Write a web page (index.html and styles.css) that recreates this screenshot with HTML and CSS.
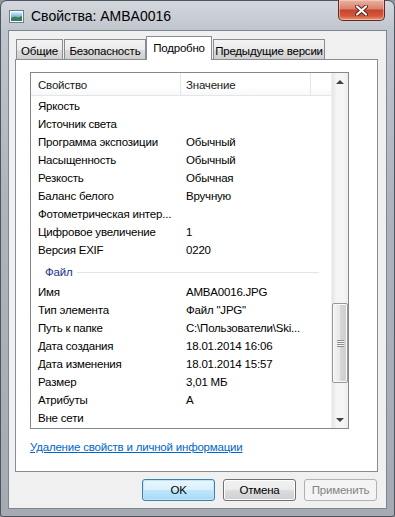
FILE: index.html
```html
<!DOCTYPE html>
<html lang="ru">
<head>
    <meta charset="UTF-8">
    <meta name="viewport" content="width=device-width, initial-scale=1.0">
    <title>Свойства: AMBA0016</title>
    <link rel="stylesheet" href="styles.css">
</head>
<body>
    <div class="window">
        <div class="titlebar">
            <svg class="app-icon" width="15" height="13" viewBox="0 0 15 13">
                <defs>
                    <linearGradient id="sky" x1="0" y1="0" x2="0" y2="1">
                        <stop offset="0" stop-color="#d6eefb"/>
                        <stop offset="0.55" stop-color="#6fb3de"/>
                        <stop offset="1" stop-color="#1d5f92"/>
                    </linearGradient>
                </defs>
                <rect x="0.5" y="0.5" width="14" height="12" fill="#fff" stroke="#6b7c8c"/>
                <rect x="2" y="2" width="11" height="9" fill="url(#sky)"/>
                <path d="M2 8 L6 6.5 L9 7.5 L13 6 L13 11 L2 11 Z" fill="#3d7d55"/>
            </svg>
            <span class="title">Свойства: AMBA0016</span>
            <div class="close-btn">
                <svg width="13" height="11" viewBox="0 0 13 11">
                    <path d="M2 1.5 L11 9.5 M11 1.5 L2 9.5" stroke="#5a2018" stroke-width="4" stroke-linecap="round"/>
                    <path d="M2 1.5 L11 9.5 M11 1.5 L2 9.5" stroke="#fff" stroke-width="2.2" stroke-linecap="round"/>
                </svg>
            </div>
        </div>

        <div class="client">
            <div class="tabs">
                <div class="tab tab-general">Общие</div>
                <div class="tab tab-security">Безопасность</div>
                <div class="tab tab-details active">Подробно</div>
                <div class="tab tab-versions">Предыдущие версии</div>
            </div>

            <div class="panel">
                <div class="listview">
                    <div class="list-main">
                        <div class="list-header">
                            <div class="hcol hcol-name">Свойство</div>
                            <div class="hcol hcol-value">Значение</div>
                            <div class="hcol hcol-rest"></div>
                        </div>
                        <div class="rows">
                            <div class="row"><span class="cell-name">Яркость</span><span class="cell-value"></span></div>
                            <div class="row"><span class="cell-name">Источник света</span><span class="cell-value"></span></div>
                            <div class="row"><span class="cell-name">Программа экспозиции</span><span class="cell-value">Обычный</span></div>
                            <div class="row"><span class="cell-name">Насыщенность</span><span class="cell-value">Обычный</span></div>
                            <div class="row"><span class="cell-name">Резкость</span><span class="cell-value">Обычная</span></div>
                            <div class="row"><span class="cell-name">Баланс белого</span><span class="cell-value">Вручную</span></div>
                            <div class="row"><span class="cell-name">Фотометрическая интер...</span><span class="cell-value"></span></div>
                            <div class="row"><span class="cell-name">Цифровое увеличение</span><span class="cell-value">1</span></div>
                            <div class="row"><span class="cell-name">Версия EXIF</span><span class="cell-value">0220</span></div>
                            <div class="group-header"><span class="group-title">Файл</span><span class="group-line"></span></div>
                            <div class="row"><span class="cell-name">Имя</span><span class="cell-value">AMBA0016.JPG</span></div>
                            <div class="row"><span class="cell-name">Тип элемента</span><span class="cell-value">Файл "JPG"</span></div>
                            <div class="row"><span class="cell-name">Путь к папке</span><span class="cell-value">C:\Пользователи\Ski...</span></div>
                            <div class="row"><span class="cell-name">Дата создания</span><span class="cell-value">18.01.2014 16:06</span></div>
                            <div class="row"><span class="cell-name">Дата изменения</span><span class="cell-value">18.01.2014 15:57</span></div>
                            <div class="row"><span class="cell-name">Размер</span><span class="cell-value">3,01 МБ</span></div>
                            <div class="row"><span class="cell-name">Атрибуты</span><span class="cell-value">A</span></div>
                            <div class="row"><span class="cell-name">Вне сети</span><span class="cell-value"></span></div>
                        </div>
                    </div>
                    <div class="scrollbar">
                        <div class="scroll-arrow"><span class="arrow-up"></span></div>
                        <div class="scroll-track">
                            <div class="scroll-thumb">
                                <span class="grip"></span>
                            </div>
                        </div>
                        <div class="scroll-arrow"><span class="arrow-down"></span></div>
                    </div>
                </div>
                <a href="#" class="remove-link">Удаление свойств и личной информации</a>
            </div>

            <div class="buttons">
                <button class="btn btn-default">OK</button>
                <button class="btn">Отмена</button>
                <button class="btn btn-disabled" disabled>Применить</button>
            </div>
        </div>
    </div>
</body>
</html>
```

FILE: styles.css
```css
* { box-sizing: border-box; }

body {
    margin: 0;
    padding: 0;
    width: 395px;
    height: 517px;
    overflow: hidden;
    font-family: "Liberation Sans", Arial, sans-serif;
    font-size: 11.5px;
    letter-spacing: -0.2px;
    color: #000;
    background-color: #8f959c;
}

.window {
    width: 395px;
    height: 517px;
    display: flex;
    flex-direction: column;
    border: 1px solid #50555b;
    border-radius: 7px 7px 3px 3px;
    background: linear-gradient(to bottom, #d3d8de 0, #bfc5cc 30px, #aeb4bb 200px, #a5abb2 100%);
}

/* title bar */
.titlebar {
    height: 29px;
    display: flex;
    align-items: center;
    padding-left: 8px;
    flex-shrink: 0;
}
.app-icon { margin-right: 7px; margin-top: 1px; }
.title {
    font-size: 14px;
    letter-spacing: 0;
    color: #000;
}
.close-btn {
    margin-left: auto;
    margin-right: 9px;
    align-self: flex-start;
    margin-top: -1px;
    width: 47px;
    height: 21px;
    border: 1px solid #5e2b24;
    border-top: none;
    border-radius: 0 0 5px 5px;
    background: linear-gradient(to bottom, #eab3a3 0, #d9806a 45%, #c7432a 50%, #d3593c 80%, #e89a72 100%);
    box-shadow: inset 0 0 0 1px rgba(255, 220, 210, 0.5);
    display: flex;
    align-items: center;
    justify-content: center;
}

/* client area */
.client {
    margin: 0 7px 7px 7px;
    height: 479px;
    border: 1px solid #80868d;
    background-color: #f0f0f0;
    padding: 5px 8px 0 6px;
    display: flex;
    flex-direction: column;
}

/* tabs */
.tabs {
    display: flex;
    align-items: flex-end;
    height: 23px;
    padding-left: 1px;
    position: relative;
    z-index: 1;
}
.tab {
    height: 20px;
    border: 1px solid #898c95;
    border-bottom: none;
    background: linear-gradient(to bottom, #f3f3f3 0, #ebebeb 50%, #dddddd 51%, #cfcfcf 100%);
    display: flex;
    align-items: center;
    justify-content: center;
    padding-top: 2px;
    white-space: nowrap;
}
.tab-general { width: 47px; }
.tab-security { width: 82px; margin-left: 1px; }
.tab-details { width: 66px; }
.tab-versions { width: 112px; margin-left: 1px; }
.tab.active {
    height: 24px;
    margin-bottom: -1px;
    background: #fff;
    padding-top: 0;
    padding-bottom: 1px;
}

.panel {
    height: 413px;
    border: 1px solid #898c95;
    background-color: #fff;
    padding: 12px 0 0 14px;
    display: flex;
    flex-direction: column;
    align-items: flex-start;
}

/* list view */
.listview {
    width: 319px;
    height: 357px;
    border: 1px solid #828790;
    display: flex;
    overflow: hidden;
}
.list-main {
    flex: 1;
    overflow: hidden;
}
.list-header {
    display: flex;
    height: 23px;
    border-bottom: 1px solid #e5e5e5;
    background: linear-gradient(to bottom, #fff 0, #fff 60%, #f7f8fa 100%);
}
.hcol {
    display: flex;
    align-items: center;
    padding-top: 2px;
    color: #1a1a1a;
    border-right: 1px solid #e3e5e8;
}
.hcol-name { width: 150px; padding-left: 7px; }
.hcol-value { width: 130px; padding-left: 5px; }
.hcol-rest { flex: 1; border-right: none; }

.row {
    display: flex;
    height: 18px;
    align-items: center;
    padding-top: 1px;
}
.cell-name {
    width: 149px;
    padding-left: 7px;
    white-space: nowrap;
}
.cell-value {
    padding-left: 6px;
    white-space: nowrap;
}

.group-header {
    height: 24px;
    display: flex;
    align-items: center;
    padding: 3px 12px 0 14px;
}
.group-title {
    color: #1e3287;
    margin-right: 5px;
}
.group-line {
    flex: 1;
    height: 1px;
    background-color: #e2e4e8;
    margin-top: 1px;
}

/* scrollbar */
.scrollbar {
    width: 17px;
    display: flex;
    flex-direction: column;
    background: linear-gradient(to right, #e6e6e6 0, #f5f5f5 30%, #f5f5f5 70%, #ececec 100%);
    border-left: 1px solid #f0f0f0;
}
.scroll-arrow {
    height: 17px;
    display: flex;
    align-items: center;
    justify-content: center;
}
.arrow-up, .arrow-down {
    width: 0;
    height: 0;
    border-left: 4px solid transparent;
    border-right: 4px solid transparent;
}
.arrow-up { border-bottom: 4px solid #404040; }
.arrow-down { border-top: 4px solid #404040; }
.scroll-track {
    flex: 1;
    padding-top: 213px;
}
.scroll-thumb {
    height: 80px;
    width: 16px;
    border: 1px solid #979797;
    border-radius: 2px;
    background: linear-gradient(to right, #f4f4f4 0, #e8e8e8 50%, #d6d6d6 51%, #cdcdcd 100%);
    box-shadow: inset 0 0 0 1px #fafafa;
    display: flex;
    align-items: center;
    justify-content: center;
}
.grip {
    width: 7px;
    height: 7px;
    background: repeating-linear-gradient(to bottom, #8f8f8f 0, #8f8f8f 1px, #f4f4f4 1px, #f4f4f4 2px);
}

.remove-link {
    margin-top: 12px;
    color: #0066cc;
    text-decoration: underline;
}

/* dialog buttons */
.buttons {
    display: flex;
    justify-content: flex-end;
    gap: 8px;
    margin-top: 7px;
    padding-right: 1px;
}
.btn {
    width: 73px;
    height: 22px;
    font-family: inherit;
    font-size: 11.5px;
    letter-spacing: -0.2px;
    color: #000;
    border: 1px solid #707070;
    border-radius: 3px;
    background: linear-gradient(to bottom, #f2f2f2 0, #ebebeb 50%, #dddddd 51%, #cfcfcf 100%);
    box-shadow: inset 0 0 0 1px #fcfcfc;
    padding: 0;
}
.btn-default {
    border-color: #3c7fb1;
    background: linear-gradient(to bottom, #eaf6fd 0, #d9f0fc 50%, #bee6fd 51%, #a7d9f5 100%);
    box-shadow: inset 0 0 0 1px #c2e4f6;
}
.btn-disabled {
    color: #838383;
    border-color: #adb2b5;
    background: #f4f4f4;
    box-shadow: none;
}
```
